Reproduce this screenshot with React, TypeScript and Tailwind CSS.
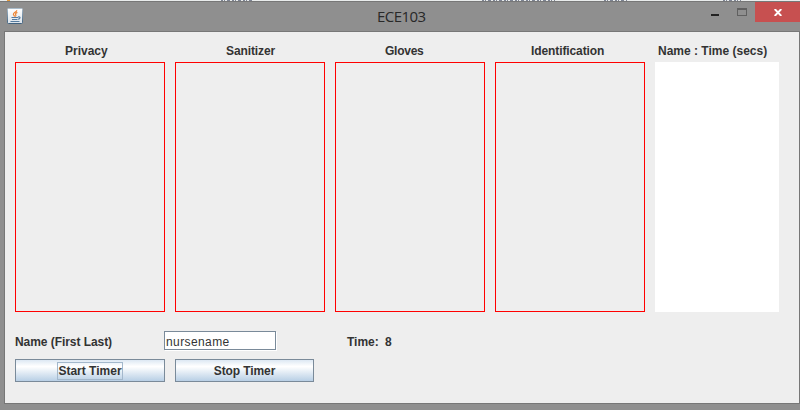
import React from 'react';

function JavaIcon() {
  return (
    <svg width="16" height="16" viewBox="0 0 16 16" className="block">
      <defs>
        <linearGradient id="tile" x1="0" y1="0" x2="0" y2="1">
          <stop offset="0" stopColor="#ffffff" />
          <stop offset="1" stopColor="#dbe3ea" />
        </linearGradient>
        <linearGradient id="edge" x1="0" y1="0" x2="0" y2="1">
          <stop offset="0" stopColor="#a9bccb" />
          <stop offset="1" stopColor="#3f617f" />
        </linearGradient>
      </defs>
      <rect x="0.5" y="0.5" width="15" height="15" rx="1" fill="url(#tile)" stroke="url(#edge)" />
      <path d="M9.8 2.2C9.8 4 6.4 4.6 6.4 6.2C6.4 7.2 7.4 7.6 7.6 8.6M10.4 4.4C8.2 5.2 8.2 6.2 8.8 6.8C9.2 7.4 8.8 8 8.4 8.6" fill="none" stroke="#ee8534" strokeWidth="1.2" />
      <path d="M4.5 9.5H11M5 11.5H10.5M11 9C13.8 8.2 13.5 11 11 11.2M3.5 13.5H12.5" fill="none" stroke="#557b9f" strokeWidth="1.2" />
    </svg>
  );
}

function BackgroundStrip() {
  return (
    <svg width="800" height="1" className="block" shapeRendering="crispEdges">
      <rect width="800" height="1" fill="#e9ecec" />
      <rect x="7" width="3" height="1" fill="#e69a3c" />
      <path d="M221 .5H252M482 .5H555M604 .5H627M723 .5H741" stroke="#7d8494" strokeDasharray="2 1 1 2 3 2" />
    </svg>
  );
}

const columns = [
  { label: 'Privacy', heading: 'pl-[50px]' },
  { label: 'Sanitizer', heading: 'pl-[51px] tracking-[-0.1px]' },
  { label: 'Gloves', heading: 'pl-[50px] tracking-[-0.25px]' },
  { label: 'Identification', heading: 'pl-[36px] tracking-[-0.1px]' },
];

const buttonStyle =
  'flex h-[23px] items-center justify-center border border-[#7a8a99] bg-[linear-gradient(to_bottom,#dde8f3_0%,#ffffff_30%,#ffffff_32%,#b8cfe5_100%)] font-bold';

export default function App() {
  return (
    <div className="flex h-[410px] w-[800px] flex-col overflow-hidden bg-[#8f8f8f] font-['Liberation_Sans',Arial,sans-serif] text-[12px] leading-[14px] text-[#333333]">
      <BackgroundStrip />
      <header className="grid h-[30px] grid-cols-[377px_1fr_auto] border-t border-[#777777]">
        <div className="pt-[6px] pl-[7px]">
          <JavaIcon />
        </div>
        <h1 className="pt-1 font-['Open_Sans',sans-serif] text-[15px] leading-5 tracking-[-0.55px] text-[#282828]">ECE103</h1>
        <div className="flex h-5">
          <button aria-label="Minimize" className="flex w-[29px] pt-[12px]">
            <span className="h-[2px] w-2 bg-[#222222]" />
          </button>
          <button aria-label="Maximize" className="flex w-[15px] pt-[6px]">
            <span className="-ml-[3px] h-2 w-[10px] border border-t-2 border-[#606060]" />
          </button>
          <button aria-label="Close" className="flex h-5 w-[45px] justify-center bg-[#c75050] pt-[7px]">
            <svg width="8" height="7" viewBox="0 0 8 7">
              <path d="M.7 0L7.3 7M7.3 0L.7 7" stroke="white" strokeWidth="1.9" />
            </svg>
          </button>
        </div>
      </header>
      <main className="ml-1 h-[373px] border border-[#777777] bg-[#eeeeee] pt-[12px] pl-[10px]">
        <div className="flex gap-[10px]">
          {columns.map((column) => (
            <section key={column.label} className="w-[150px]">
              <h2 className={`mb-1 font-bold ${column.heading}`}>{column.label}</h2>
              <div className="h-[250px] border border-[#ff0000]" />
            </section>
          ))}
          <section className="w-[124px]">
            <h2 className="mb-1 pl-[3px] font-bold whitespace-nowrap">Name : Time (secs)</h2>
            <div className="h-[250px] bg-white" />
          </section>
        </div>
        <div className="mt-[19px] flex h-5">
          <label htmlFor="nurse" className="w-[149px] pt-1 font-bold tracking-[-0.06px]">Name (First Last)</label>
          <input
            id="nurse"
            defaultValue="nursename"
            className="h-[19px] w-[112px] border border-[#7a8a99] bg-white px-[1px] pt-[2px] text-[12px] leading-[14px] tracking-[0.4px] shadow-[1px_1px_0_white] outline-none"
          />
          <div className="ml-[71px] flex pt-1 font-bold">
            <span className="w-[38px]">Time:</span>
            <span>8</span>
          </div>
        </div>
        <div className="mt-2 flex gap-[10px]">
          <button className={`${buttonStyle} w-[150px]`}>
            <span className="flex h-[18px] w-[66px] items-center justify-center border border-[#a3b8cc] whitespace-nowrap">Start Timer</span>
          </button>
          <button className={`${buttonStyle} w-[139px] tracking-[-0.1px]`}>Stop Timer</button>
        </div>
      </main>
    </div>
  );
}
